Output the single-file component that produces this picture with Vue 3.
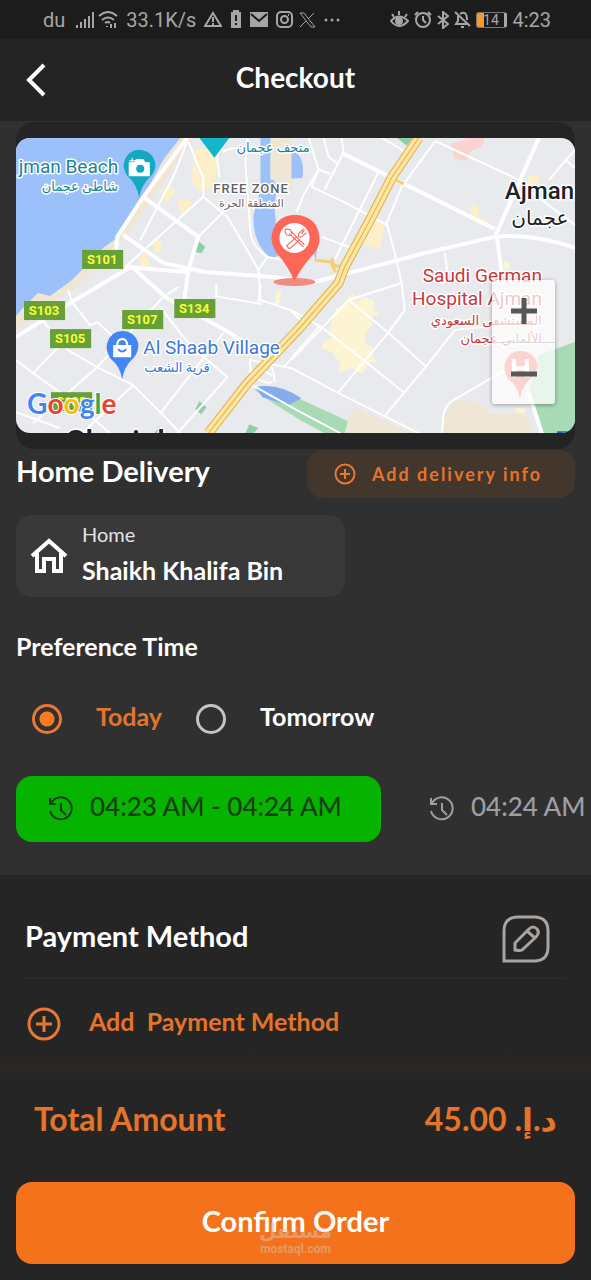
<script setup>
import { ref } from 'vue';

const day = ref('today');
const slot = ref(0);

const days = [
    { id: 'today', label: 'Today' },
    { id: 'tomorrow', label: 'Tomorrow' }
];

const slots = ['04:23 AM - 04:24 AM', '04:24 AM - 04:25 AM'];

const shields = [
    { name: 'S101', x: 82, y: 250 },
    { name: 'S103', x: 24, y: 301 },
    { name: 'S105', x: 50, y: 329 },
    { name: 'S107', x: 122, y: 310 },
    { name: 'S134', x: 174, y: 299 },
    { name: 'S108', x: 51, y: 392 }
];

const mainRoads = [
    'M187 138L143 197L117 237L116 252',
    'M143 197L198 237L188 270L184 300',
    'M123 235L163 263L205 272L273 277L310 283L341 275L424 253L494 237Q530 233 574 248',
    'M125 267L187 272',
    'M132 266L70 303L16 337',
    'M133 268L165 297L230 333L273 363',
    'M494 237L518 183L538 138',
    'M494 229L401 183L341 153',
    'M496 237L501 273',
    'M528 393L541 433'
];

const roads = [
    'M187 142L173 177L140 240',
    'M125 267L203 197V178L188 142',
    'M198 237L227 208',
    'M203 197L227 217L245 247L258 270L260 300L290 310L305 325',
    'M258 270L267 257L283 260',
    'M247 138L245 163L248 203L250 233Q252 247 267 257',
    'M220 138L217 160L219 178',
    'M222 152Q238 145 245 151',
    'M16 360L33 373L75 403L110 433',
    'M40 318L68 350L97 367L133 385L163 415L180 433',
    'M68 290L72 302L90 325L97 322L128 350',
    'M33 423L97 367L163 297L178 287',
    'M16 412L60 428',
    'M33 373L72 333',
    'M82 433L133 385',
    'M160 413L223 333',
    'M177 433L227 377L190 345L180 333L160 307',
    'M216 297V284M214 296L262 304M258 302L260 284',
    'M284 366L320 325',
    'M434 141L518 180',
    'M381 138L403 151',
    'M434 142L401 187L386 223L394 253L401 283L404 310L388 332L338 392',
    'M311 187L343 202L386 225',
    'M308 138L318 170L303 195L296 213',
    'M318 170L330 174M311 187L318 170',
    'M323 138L328 157L337 164M341 138L343 153L324 190',
    'M379 170L334 260',
    'M321 237L351 248',
    'M444 253L447 275',
    'M574 150L548 180M564 160L574 168',
    'M518 183L574 225',
    'M291 360L348 300L401 283',
    'M348 300L388 333L426 367',
    'M291 310L321 327L363 360L403 392',
    'M250 360L291 368L338 393L418 433',
    'M383 417L424 368L454 330L500 325',
    'M441 433L443 413Q446 402 458 397L504 370',
    'M250 384L300 412L340 433',
    'M250 358q-2 14 6 20q10 6 16 4M266 362q8 4 8 20M248 372q12-6 24 4'
];

const highway = 'M418 138L391 178L371 217L344 267L338 283L300 327L247 383L208 433';
</script>

<template>
    <div class="screen">
        <div class="status">
            <span class="carrier">du</span>
            <svg width="18" height="16" viewBox="0 0 18 16" class="line">
                <path d="M1 13v3M5 10v6M9 7v9M13 4v12M17 0v16" />
            </svg>
            <svg width="20" height="18" viewBox="0 0 20 18" class="line">
                <path d="M1 5q9-8 18 0M4 9q6-5 12 0M7 12q3-2 5 0M9 15v1M13 17v-4M17 12v5" />
            </svg>
            <span class="speed">33.1K/s</span>
            <svg width="18" height="17" viewBox="0 0 18 17" class="line">
                <path d="M9 2L17 15H1ZM9 6v5M9 12v2" />
            </svg>
            <svg width="12" height="19" viewBox="0 0 12 19">
                <path d="M3 0h6v2h2v16H1V2h2z" fill="#a6a6a6" />
                <path d="M6 5v6M6 13v2" stroke="#1c1c1c" stroke-width="2" />
            </svg>
            <svg width="18" height="15" viewBox="0 0 18 15">
                <path d="M0 0h18v15H0z" fill="#a6a6a6" />
                <path d="M1 2l8 7 8-7" fill="none" stroke="#1c1c1c" stroke-width="2" />
            </svg>
            <svg width="17" height="17" viewBox="0 0 17 17" class="line insta">
                <rect x="1" y="1" width="15" height="15" rx="4" />
                <circle cx="8.5" cy="8.5" r="3.5" />
                <path d="M12 4h1" />
            </svg>
            <svg width="17" height="16" viewBox="0 0 17 16" class="line thin">
                <path d="M1 1h4l11 14h-4zM15 1L9 7M7 9l-6 6" />
            </svg>
            <svg width="16" height="4" viewBox="0 0 16 4" fill="#a6a6a6">
                <circle cx="2" cy="2" r="1.5" />
                <circle cx="8" cy="2" r="1.5" />
                <circle cx="14" cy="2" r="1.5" />
            </svg>
            <div class="status-right">
                <svg width="19" height="17" viewBox="0 0 19 17" class="line">
                    <path d="M1 10q8-9 17 0q-9 10-17 0zM2 3l2 3M9 0v4M17 3l-2 3" />
                    <circle cx="9" cy="10" r="3" fill="#a6a6a6" />
                </svg>
                <svg width="18" height="17" viewBox="0 0 18 17" class="line">
                    <circle cx="9" cy="9" r="7" />
                    <path d="M9 5v4l3 3M1 4l3-3M17 4l-3-3" />
                </svg>
                <svg width="12" height="18" viewBox="0 0 12 18" class="line">
                    <path d="M1 5l10 8-5 4V1l5 4-10 8" />
                </svg>
                <svg width="17" height="17" viewBox="0 0 17 17" class="line">
                    <path d="M1 1l15 14M4 5v5l-2 3h11M6 3q7-4 7 6M7 16h3" />
                </svg>
                <span class="battery">14</span>
                <span class="clock">4:23</span>
            </div>
        </div>

        <header class="header">
            <button class="back" aria-label="Back">
                <svg width="20" height="34" viewBox="0 0 20 34">
                    <path d="M18 2L3 17l15 15" fill="none" stroke="#fff" stroke-width="4" />
                </svg>
            </button>
            <h1>Checkout</h1>
        </header>

        <main class="content">
            <div class="map-card">
                <div class="map">
                    <svg class="map-canvas" viewBox="16 138 558 295" preserveAspectRatio="xMidYMid slice">
                        <path d="M16 138h558v295H16z" fill="#e8eaed" />
                        <!-- sea, beach and lagoon -->
                        <path d="M178 138h16L150 202 118 246 75 288 16 330V300L104 245 146 185 160 154z" fill="#efe6d5" />
                        <path d="M16 138H180L163 160 146 192 117 238 104 247 72 280 50 296 38 293 22 309 16 316z" fill="#9cc0f9" />
                        <path d="M260 138h24v12l-14 6v24h12l-6 12-2 14 4 50-8 2Q252 243 253 216L260 190z" fill="#9cc0f9" />
                        <path d="M270 138h20l2 52-14-2-8-12z" fill="#efe6d5" />
                        <path d="M291 151q14 4 11 27l-11 1zM312 246h5l-2 14z" fill="#9cc0f9" />
                        <!-- built-up blocks -->
                        <path d="M194 151l9-3 13 6v22l-6 12-11 4-8-12 2-14zM161 190l9-4 5 6-8 10-5-3zM177 202l8-3 7 3-3 8-9 4-2-6zM151 242l8-3 3 10-6 5zM138 257l8-4 4 12-9 2zM371 219l13 6-5 25-17-7zM470 204l8 3-1 9 12 5-4 5-15-6zM528 176l11-1-2 10-10-1z" fill="#fdf0c8" />
                        <path d="M336 308l7-3 2-5 9 3 10-6 10 4-1 8 5 5-9 4 3 8-6 4-2 14 9 4-1 8 4 5-7 2-8 11-9-6-14 4 2-9-9-11-10-4 3-7 7-2-3-7zM346 299l6-5 5 4-3 5zM503 262h6v7h-6zM276 291h5l-2 14h-5zM515 407l10 2-2 8-7-2z" fill="#fdf4d4" />
                        <path d="M450 144l12-3 5-3h17l-3 9-11 4-4 10-12-2z" fill="#fad2cf" />
                        <!-- parks -->
                        <path d="M197 240l8 7-4 6-7-1zM199 401l7 6-5 7-6-5zM159 426l5 7h-10zM249 424l9 4-5 5h-8zM396 138h16l-6 8z" fill="#8fcfa7" />
                        <path d="M574 342l-36 13-6 15-4 27 13 36h33zM291 395l83 38h-50l-24-13-27-17-20-14z" fill="#a8dab5" />
                        <path d="M255 387q22-5 46 11l-13 7-26-8z" fill="#84acef" />
                        <path d="M354 407l57 26h-67l4-15zM458 400l20 2 10 11h33l15 20h-95q-1-24 17-33z" fill="#efe6d5" />
                        <path d="M556 431h18v4h-18z" fill="#1967b2" />

                        <g class="road">
                            <path v-for="d in roads" :key="d" :d="d" stroke-width="2" />
                            <path v-for="d in mainRoads" :key="d" :d="d" stroke-width="4" />
                        </g>
                        <g class="road">
                            <path d="M391 178l12 6M314 260l16 2 5 10M332 258q-2 10 10 8" class="ramp" />
                            <path :d="highway" class="highway-edge" />
                            <path :d="highway" class="highway" />
                            <path :d="highway" class="highway-line" />
                        </g>

                        <g v-for="s in shields" :key="s.name">
                            <rect :x="s.x" :y="s.y" width="41" height="19" fill="#689f38" />
                            <text :x="s.x + 20" :y="s.y + 14" class="shield">{{ s.name }}</text>
                        </g>

                        <path d="M199 138h30l-15 20z" fill="#12b5cb" />
                        <path d="M139 198Q137 185 127 176Q122 168 124 162Q128 150 139 150Q152 151 155 163Q156 171 150 177Q141 185 139 198Z" fill="#12a9c2" />
                        <path d="M129 163h5l2-3h7l2 3h4v13h-20zM132 158v6M129 161h6" fill="#fff" stroke="#fff" />
                        <circle cx="140" cy="169" r="4" fill="#12a9c2" />

                        <path d="M122 379Q120 366 110 358Q105 350 107 343Q111 331 122 331Q134 331 138 343Q139 352 133 358Q124 366 122 379Z" fill="#4285f4" />
                        <path d="M113 345h18v12h-18z" fill="#fff" />
                        <path d="M117 346q0-7 5-7t5 7" fill="none" stroke="#fff" stroke-width="2" />
                        <path d="M118 349q4 5 8 0" fill="none" stroke="#4285f4" stroke-width="2" />

                        <g class="label">
                            <text x="118" y="173" font-size="19" fill="#1b8596" text-anchor="end">jman Beach</text>
                            <text x="118" y="191" font-size="13" fill="#1b8596" text-anchor="end">شاطئ عجمان</text>
                            <text x="236" y="152" font-size="13" fill="#1b8596">متحف عجمان</text>
                            <text x="213" y="193" font-size="13" class="area">FREE ZONE</text>
                            <text x="251" y="207" font-size="11" fill="#5f6368" text-anchor="middle">المنطقة الحرة</text>
                            <text x="504" y="199" font-size="24" fill="#202124" class="medium">Ajman</text>
                            <text x="539" y="225" font-size="20" fill="#202124" text-anchor="middle">عجمان</text>
                            <text x="541" y="282" font-size="19" fill="#c5393c" text-anchor="end">Saudi German</text>
                            <text x="541" y="305" font-size="19" fill="#c5393c" text-anchor="end">Hospital Ajman</text>
                            <text x="541" y="325" font-size="13" fill="#c5393c" text-anchor="end">المستشفى السعودي</text>
                            <text x="541" y="343" font-size="13" fill="#c5393c" text-anchor="end">الألماني عجمان</text>
                            <text x="143" y="354" font-size="19" fill="#3c78d8">Al Shaab Village</text>
                            <text x="144" y="372" font-size="13" fill="#3c78d8">قرية الشعب</text>
                            <text x="66" y="452" font-size="32" fill="#202124" class="medium">Sharjah</text>
                        </g>

                        <path d="M519 399Q517 386 507 378Q502 370 504 363Q508 351 519 351Q532 351 536 363Q537 371 530 378Q521 386 519 399Z" fill="#ee675c" />
                        <path d="M513 359v18M526 359v18M513 368h13" stroke="#fff" stroke-width="4" />

                        <text x="27" y="414" class="google">
                            <tspan fill="#4285f4">G</tspan><tspan fill="#ea4335">o</tspan><tspan fill="#fbbc05">o</tspan><tspan fill="#4285f4">g</tspan><tspan fill="#34a853">l</tspan><tspan fill="#ea4335">e</tspan>
                        </text>

                        <!-- restaurant pin -->
                        <ellipse cx="294" cy="282" rx="21" ry="4" fill="#f28b82" />
                        <path d="M294 282Q289 268 277 254Q271 246 271 238Q273 216 295 215Q318 217 319 239Q319 247 313 254Q300 268 294 282Z" fill="#fe6757" />
                        <circle cx="294" cy="238" r="15" fill="#fff" />
                        <g fill="none" stroke="#e8604f">
                            <path d="M289 234l14 13M291 232l13 13M286 246l10-9M289 249l10-9M286 246l3 3" />
                            <path d="M303 229l-5 5q-1 4 3 3l5-4M301 234l3-4M286 235q-3-6 0-6 5 0 5 3 0 5-5 3z" />
                        </g>
                    </svg>
                    <div class="zoom">
                        <button aria-label="Zoom in">
                            <svg width="28" height="28" viewBox="0 0 28 28">
                                <path d="M14 1v26M1 14h26" stroke="#575757" stroke-width="5" />
                            </svg>
                        </button>
                        <button aria-label="Zoom out">
                            <svg width="28" height="28" viewBox="0 0 28 28">
                                <path d="M1 14h26" stroke="#575757" stroke-width="5" />
                            </svg>
                        </button>
                    </div>
                </div>
            </div>

            <div class="delivery">
                <h2>Home Delivery</h2>
                <button class="add-info">
                    <svg width="22" height="22" viewBox="0 0 22 22" class="plus">
                        <circle cx="11" cy="11" r="9.5" />
                        <path d="M11 6v10M6 11h10" />
                    </svg>
                    Add delivery info
                </button>
            </div>

            <button class="address">
                <svg width="40" height="36" viewBox="0 0 40 36">
                    <path d="M3 18L20 3l17 15M8 15v18h7V21h10v12h7V15" fill="none" stroke="#fff" stroke-width="4" />
                </svg>
                <span class="address-text">
                    <span class="address-type">Home</span>
                    <span class="address-name">Shaikh Khalifa Bin</span>
                </span>
            </button>

            <h3 id="time-title">Preference Time</h3>
            <div class="days" role="radiogroup" aria-labelledby="time-title">
                <label v-for="d in days" :key="d.id" :class="{ active: day === d.id }">
                    <input v-model="day" type="radio" name="day" :value="d.id">
                    <span>{{ d.label }}</span>
                </label>
            </div>

            <div class="slots">
                <button v-for="(s, i) in slots" :key="s" class="slot" :class="{ active: slot === i }" @click="slot = i">
                    <svg width="26" height="26" viewBox="0 0 26 26">
                        <path d="M3 7A11 11 0 1 1 2 15M2 2v6h6M13 7v7l5 5" />
                    </svg>
                    <span>{{ s }}</span>
                </button>
            </div>
        </main>

        <section class="payment">
            <div class="payment-head">
                <h2>Payment Method</h2>
                <button class="edit" aria-label="Edit payment method">
                    <svg width="48" height="48" viewBox="0 0 48 48">
                        <path d="M2 46V16Q2 2 16 2h16q14 0 14 14v16q0 14-14 14z" />
                        <path d="M13 35v-7l14-14q4-4 8 0 3 4-1 8L20 35q-2 1-7 0zM25 16l8 7" />
                    </svg>
                </button>
            </div>
            <button class="add-payment">
                <svg width="34" height="34" viewBox="0 0 34 34" class="plus">
                    <circle cx="17" cy="17" r="15" />
                    <path d="M17 9v16M9 17h16" />
                </svg>
                <span>Add&nbsp; Payment Method</span>
            </button>
        </section>

        <footer class="footer">
            <div class="total">
                <span>Total Amount</span>
                <span>45.00 <bdi dir="rtl">د.إ.</bdi></span>
            </div>
            <button class="confirm">
                Confirm Order
                <span class="mark"><b>مستقل</b>mostaql.com</span>
            </button>
        </footer>
    </div>
</template>

<style>
body {
    background: #252525;
}
</style>

<style scoped>
.screen {
    color: #fff;
    font-family: Lato, "DejaVu Sans", sans-serif;
    font-weight: 700;
}

button {
    margin: 0;
    padding: 0;
    border: none;
    background: none;
    color: inherit;
    font: inherit;
    cursor: pointer;
}

h1,
h2,
h3 {
    margin: 0;
}

svg {
    display: block;
    flex: none;
}

.status {
    display: flex;
    align-items: center;
    gap: 8px;
    height: 39px;
    padding: 0 40px 0 43px;
    background: #1c1c1c;
    color: #a6a6a6;
    font: 400 20px/24px Roboto, sans-serif;
}

.line {
    fill: none;
    stroke: #a6a6a6;
    stroke-width: 2;
}

.thin {
    stroke-width: 1;
}

.carrier {
    margin-right: 3px;
}

.status .line + .line {
    margin-left: -4px;
}

.status .insta + .thin {
    margin-left: -2px;
}

.status-right {
    display: flex;
    align-items: center;
    gap: 5px;
    margin-left: auto;
}

.status .status-right .line + .line {
    margin-left: 0;
}

.battery {
    width: 31px;
    box-sizing: border-box;
    border: 1px solid #777;
    border-right: 3px double #a6a6a6;
    border-radius: 3px;
    background: linear-gradient(90deg, #f79a2b 7px, transparent 7px);
    font-size: 14px;
    line-height: 14px;
    text-align: center;
}

.header {
    display: grid;
    grid-template-columns: 40px 1fr 40px;
    align-items: center;
    height: 82px;
    padding: 0 16px;
    background: #242424;
}

.header h1 {
    padding-bottom: 6px;
    font-size: 28px;
    line-height: 32px;
    text-align: center;
}

.back {
    padding-left: 10px;
}

.content {
    padding: 1px 16px 33px;
    background: #303030;
    overflow: hidden;
}

.map-card {
    padding: 16px 0;
    border-radius: 18px;
    background: #242424;
}

.map {
    position: relative;
    height: 295px;
    border-radius: 14px;
    overflow: hidden;
}

.map-canvas {
    width: 100%;
    height: 100%;
    font-family: Roboto, "DejaVu Sans", sans-serif;
}

.road {
    fill: none;
    stroke: #fff;
    stroke-linejoin: round;
}

.ramp {
    stroke: #f3cf78;
    stroke-width: 3;
}

.highway-edge {
    stroke: #dfb047;
    stroke-width: 10;
}

.highway {
    stroke: #fde6a3;
    stroke-width: 8;
}

.highway-line {
    stroke: #dfb047;
}

.shield {
    fill: #f4ff3a;
    font-size: 13px;
    font-weight: 700;
    text-anchor: middle;
}

.label {
    font-weight: 400;
    stroke: #fff;
    stroke-width: 3px;
    stroke-linejoin: round;
    paint-order: stroke;
}

.area {
    fill: #5f6368;
    font-weight: 500;
    letter-spacing: 1px;
}

.medium {
    font-weight: 500;
}

.google {
    font-family: Lato, sans-serif;
    font-size: 28px;
    font-weight: 700;
    stroke: #fff;
    stroke-width: 2px;
    paint-order: stroke;
}

.zoom {
    position: absolute;
    right: 20px;
    bottom: 29px;
    display: grid;
    border-radius: 3px;
    background: rgba(255, 255, 255, 0.72);
    box-shadow: 0 1px 4px rgba(0, 0, 0, 0.35);
}

.zoom button {
    display: grid;
    place-items: center;
    width: 63px;
    height: 62px;
}

.zoom button + button {
    border-top: 1px solid #ddd;
}

.delivery {
    display: flex;
    justify-content: space-between;
    margin-top: 1px;
}

h2 {
    font-size: 29px;
    line-height: 42px;
}

.add-info {
    display: flex;
    align-items: center;
    justify-content: center;
    gap: 16px;
    width: 268px;
    height: 48px;
    padding-right: 6px;
    border-radius: 16px;
    background: #43362d;
    color: #e5742b;
    font-size: 18px;
    letter-spacing: 2px;
}

.plus {
    fill: none;
    stroke: #e97832;
    stroke-width: 2;
}

.add-payment .plus {
    stroke-width: 3;
}

.address {
    display: flex;
    align-items: center;
    gap: 13px;
    width: 329px;
    height: 82px;
    margin-top: 17px;
    padding-left: 13px;
    border-radius: 16px;
    background: #393939;
    text-align: left;
}

.address-text {
    display: grid;
    padding-bottom: 8px;
    line-height: 36px;
}

.address-type {
    color: #e3e3ea;
    font-size: 20px;
    font-weight: 400;
}

.address-name {
    font-size: 25px;
}

h3 {
    margin-top: 33px;
    font-size: 25px;
    line-height: 32px;
}

.days {
    display: flex;
    gap: 34px;
    margin-top: 38px;
    padding-left: 16px;
    font-size: 25px;
    line-height: 32px;
}

.days label {
    display: flex;
    align-items: center;
    gap: 34px;
    cursor: pointer;
}

.days label.active {
    color: #e5742b;
}

.days span {
    padding-bottom: 6px;
}

.days input {
    appearance: none;
    width: 30px;
    height: 30px;
    margin: 0;
    border: 3px solid #c4c4c4;
    border-radius: 50%;
}

.days input:checked {
    border-color: #e97832;
    background: radial-gradient(circle, #ff7a1e 7px, transparent 8px);
}

.slots {
    display: flex;
    gap: 16px;
    margin-top: 38px;
}

.slot {
    display: flex;
    flex: none;
    align-items: center;
    gap: 16px;
    width: 365px;
    height: 66px;
    padding-left: 32px;
    border-radius: 16px;
    color: #9e9ea3;
    font-size: 26px;
    font-weight: 500;
    white-space: nowrap;
}

.slot span {
    padding-bottom: 6px;
}

.slot.active {
    background: #06b400;
    color: #174014;
}

.slot svg {
    fill: none;
    stroke: currentColor;
    stroke-width: 2;
}

.payment {
    padding: 40px 25px 29px;
    background: linear-gradient(#252525 178px, #2d2724);
}

.payment-head {
    display: flex;
    justify-content: space-between;
    padding: 0 16px 15px 0;
    border-bottom: 1px solid #303030;
}

.edit svg {
    fill: none;
    stroke: #aba49e;
    stroke-width: 3;
}

.add-payment {
    display: flex;
    align-items: center;
    gap: 28px;
    margin-top: 25px;
    padding-left: 2px;
    color: #e5742b;
    font-size: 25px;
    line-height: 34px;
}

.add-payment span {
    padding-bottom: 6px;
}

.footer {
    padding: 26px 16px 17px;
    background: #252525;
}

.total {
    display: flex;
    justify-content: space-between;
    padding: 0 18px;
    color: #e5742b;
    font-size: 32px;
    line-height: 40px;
}

.confirm {
    position: relative;
    width: 100%;
    height: 82px;
    margin-top: 43px;
    padding-bottom: 6px;
    border-radius: 16px;
    background: #f4721b;
    font-size: 29px;
}

.mark {
    position: absolute;
    inset: 38px 0 0;
    display: grid;
    align-content: start;
    color: rgba(215, 195, 180, 0.5);
    font: 700 12px/14px Roboto, sans-serif;
}

.mark b {
    font: 700 20px/22px "DejaVu Sans", sans-serif;
}
</style>
